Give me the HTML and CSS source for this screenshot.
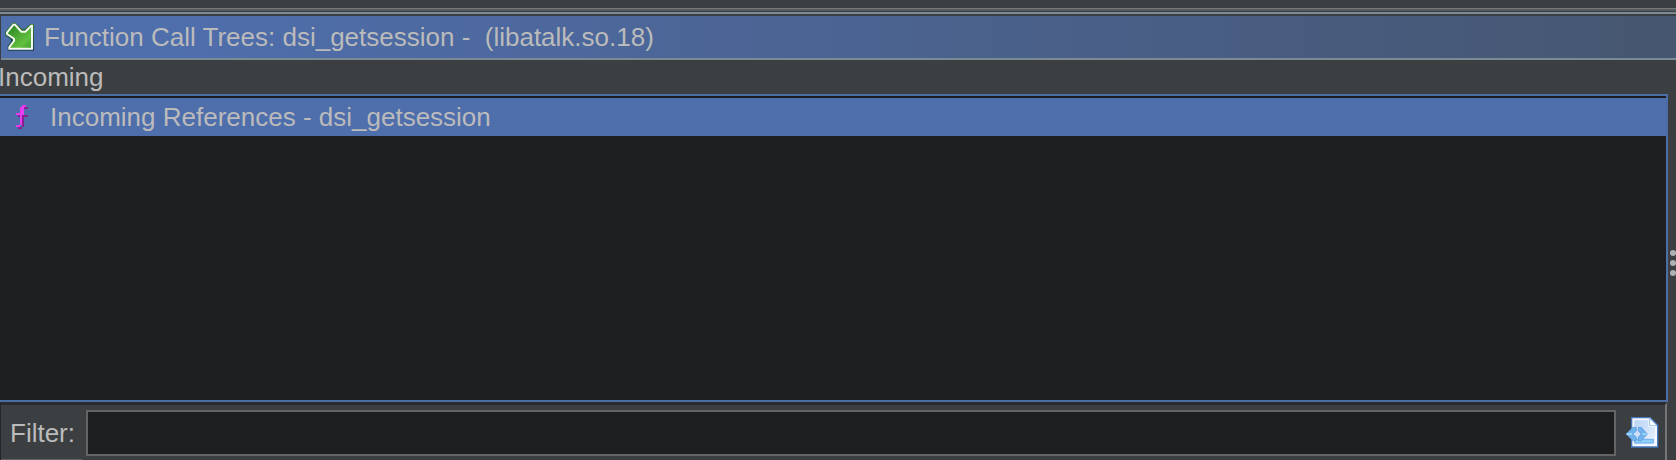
FILE: index.html
```html
<!DOCTYPE html>
<html lang="en">
<head>
<meta charset="utf-8">
<title>Function Call Trees</title>
<link rel="stylesheet" href="styles.css">
</head>
<body>
<main class="window">
  <div class="splitter"></div>
  <header class="titlebar">
    <svg class="titlebar-icon" viewBox="0 0 102 102" aria-hidden="true">
      <defs>
        <linearGradient id="arrow-edge" x1="0" y1="0" x2="0" y2="1">
          <stop offset="0" stop-color="#2f7a2c"/><stop offset="1" stop-color="#173f4a"/>
        </linearGradient>
        <linearGradient id="arrow-fill" x1="0" y1="0" x2="1" y2="1">
          <stop offset="0.1" stop-color="#2f8a25"/><stop offset="0.7" stop-color="#62bf3e"/><stop offset="1" stop-color="#3f9a30"/>
        </linearGradient>
      </defs>
      <path d="M26 5h9l19 19h8L79 9h11v80H11V74l10-12v-6L3 42v-9z" fill="url(#arrow-edge)"/>
      <path d="M28 11h5l19 21h12l18-18h2v69H16v-5l14-18v-7L9 39v-4z" fill="url(#arrow-fill)" stroke="#f4f7ef" stroke-width="6"/>
    </svg>
    <h1 class="title">Function Call Trees: dsi_getsession -&nbsp; (libatalk.so.18)</h1>
  </header>
  <div class="content">
    <section class="incoming">
      <h2 class="section-label" id="incoming-label">Incoming</h2>
      <ul class="tree" role="tree" aria-labelledby="incoming-label">
        <li class="tree-row" role="treeitem" aria-selected="true">
          <svg class="function-icon" viewBox="0 0 12 24" shape-rendering="crispEdges" aria-hidden="true">
            <path d="M6 2h6v2H8v18H6v2H2v-2h4zM8 10h4v2H8z" fill="#8a1f93"/>
            <path d="M6 0h4v2H8v8H6v10H4v2H0v-2h4v-10H0V8h4V2h2z" fill="#e63cf0"/>
            <path d="M2 10h2v2H2zM6 10h2v10H6z" fill="#8a1f93"/>
          </svg>
          <span>Incoming References - dsi_getsession</span>
        </li>
      </ul>
      <form class="filter">
        <label class="filter-label" for="filter-text">Filter:</label>
        <input class="filter-input" id="filter-text" type="text">
        <button class="filter-options" type="button" aria-label="Filter options">
          <svg class="options-icon" viewBox="0 0 108 114" aria-hidden="true">
            <defs>
              <linearGradient id="page-fill" x1="0" y1="0" x2="1" y2="1">
                <stop offset="0" stop-color="#b9d3f5"/><stop offset="1" stop-color="#eaf3ff"/>
              </linearGradient>
            </defs>
            <path d="M21 12h58l24 24v68H21z" fill="#4577bd"/>
            <path d="M25 16h52l22 22v62H25z" fill="#f5f9ff"/>
            <path d="M31 22h42v20h20v52H31z" fill="url(#page-fill)"/>
            <path d="M77 16v22h22z" fill="#fff" stroke="#9fc0ea" stroke-width="3"/>
            <path d="M32 79h56v11H32z" fill="#8ed0fa" stroke="#6aaeea" stroke-width="3"/>
            <path d="M6 63l21-20h10v11l-10 9 10 9v11H27z" fill="#6fb2ec" stroke="#5a9ade" stroke-width="2"/>
            <path d="M43 43h9l18 20-18 20h-9V72l8-9-8-9z" fill="#6fb2ec" stroke="#5a9ade" stroke-width="2"/>
            <path d="M8 60h16v6H8zM55 60h12v6H55z" fill="#9ad3fb"/>
          </svg>
        </button>
      </form>
    </section>
    <div class="divider" role="separator" aria-orientation="vertical">
      <svg class="grip" viewBox="0 0 6 26" aria-hidden="true">
        <circle cx="3" cy="3" r="3"/><circle cx="3" cy="13" r="3"/><circle cx="3" cy="23" r="3"/>
      </svg>
    </div>
  </div>
</main>
</body>
</html>
```
FILE: styles.css
```css
* { box-sizing: border-box; }
body {
  margin: 0;
  background: #3c3f41;
  color: #bbbbbb;
  font: 26px/34px "Liberation Sans", Arial, sans-serif;
}
.window {
  display: flex;
  flex-direction: column;
  height: 100vh;
  overflow: hidden;
}
.splitter {
  flex: none;
  height: 6px;
  margin: 8px 0 2px;
  border-top: 1px solid #76797a;
  border-bottom: 2px solid #7b8b95;
  background: linear-gradient(#565b5c 2px, #3c3f41 2px);
}
.titlebar {
  flex: none;
  display: flex;
  align-items: center;
  gap: 6px;
  height: 44px;
  margin-left: 1px;
  padding: 2px 0 0 3px;
  border-bottom: 2px solid #7b8b95;
  background: linear-gradient(90deg, #4f6eac 10%, #465670);
}
.titlebar-icon { width: 34px; height: 34px; }
.title, .section-label {
  margin: 0;
  font-size: 26px;
  font-weight: normal;
  white-space: nowrap;
}
.title { padding-bottom: 2px; }
.content { flex: 1; display: flex; min-height: 0; }
.incoming { flex: 1; display: flex; flex-direction: column; min-width: 0; }
.section-label { flex: none; margin-left: -2px; }
.tree {
  flex: 1;
  min-height: 0;
  margin: 0;
  padding: 2px 0 0;
  border: 2px solid #4b6ea6;
  border-left: 0;
  background: #1d1e20;
  list-style: none;
}
.tree-row {
  display: flex;
  align-items: center;
  gap: 22px;
  height: 38px;
  padding-left: 16px;
  background: #4f6eac;
}
.function-icon { width: 12px; height: 24px; }
.filter {
  flex: none;
  display: flex;
  align-items: center;
  height: 58px;
  margin: 0 1px 0 0;
  padding-right: 5px;
  border-top: 3px solid #292b2d;
  border-left: 1px solid #232526;
  border-right: 2px solid #747677;
}
.filter-label {
  align-self: stretch;
  width: 81px;
  margin-right: 4px;
  padding: 11px 0 0 9px;
  border-bottom: 1px solid #606364;
  white-space: nowrap;
}
.filter-input {
  flex: 1;
  min-width: 0;
  height: 46px;
  margin-right: 8px;
  padding: 0 6px;
  border: 2px solid #646464;
  background: #1d1e20;
  color: inherit;
  font: inherit;
}
.filter-options { display: flex; padding: 0 0 2px; border: 0; background: none; }
.options-icon { width: 36px; height: 38px; }
.divider {
  flex: none;
  display: flex;
  align-items: center;
  width: 8px;
  padding: 6px 0 0 2px;
}
.grip { width: 6px; height: 26px; fill: #afb1b3; }
```
